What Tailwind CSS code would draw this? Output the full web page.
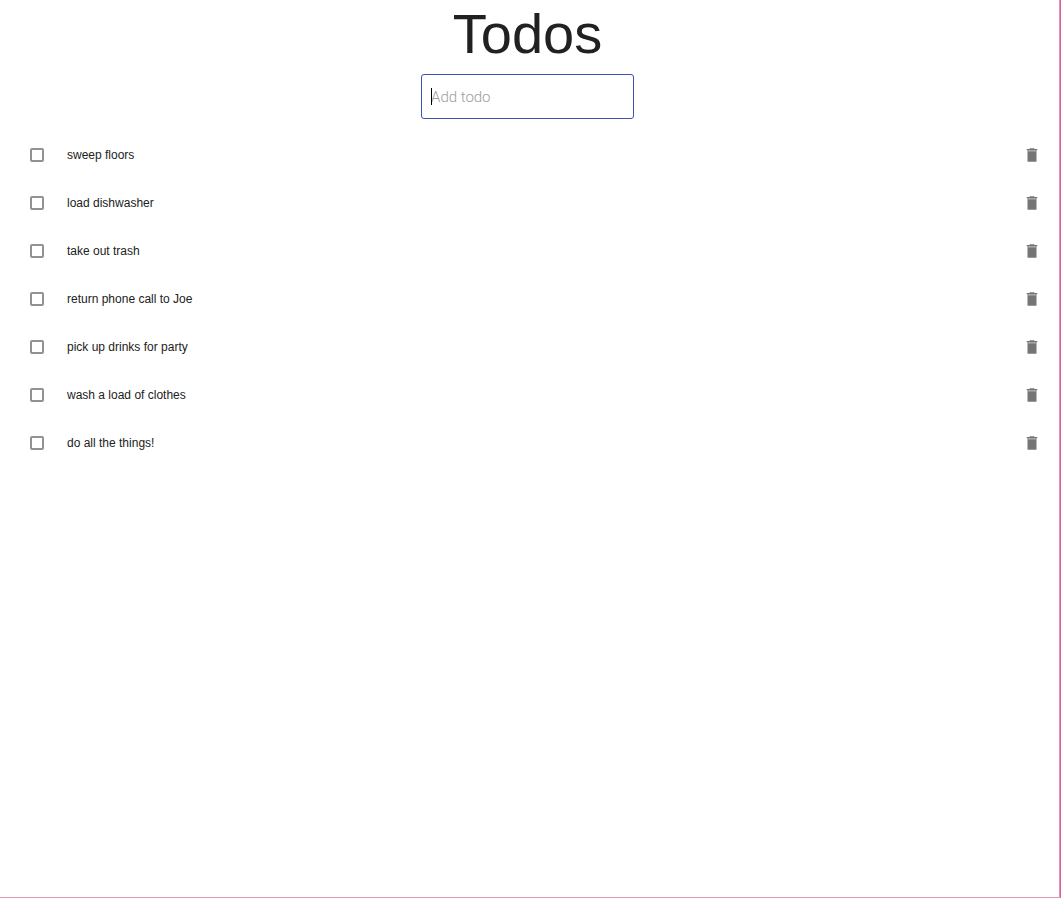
<!DOCTYPE html>
<html lang="en">
<head>
<meta charset="utf-8">
<meta name="viewport" content="width=device-width, initial-scale=1">
<title>Todos</title>
<script src="https://cdn.jsdelivr.net/npm/@tailwindcss/browser@4"></script>
</head>
<body class="flex min-h-screen flex-col items-stretch border-r border-b border-r-[#d9609b] border-b-[#e892b9] bg-white font-['Liberation_Sans',sans-serif] text-[#212121]">
<main class="flex-1 border-r border-[#ee8fbd] pr-1">
<h1 class="pt-1 text-center text-[56px] leading-[60px]">Todos</h1>
<form class="mt-[10px] flex justify-center">
  <div class="relative">
    <input type="text" placeholder="Add todo" aria-label="Add todo" class="block h-[45px] w-[213px] rounded-[3px] border border-[#3f51b5] bg-white px-[9px] font-['Roboto',sans-serif] text-[15px] font-light outline-none placeholder:text-[#9e9e9e]">
    <span class="absolute top-[14px] left-[10px] h-[17px] w-px bg-black"></span>
  </div>
</form>
<ul id="todos" class="mt-3 pr-[11px] pl-[30px]"></ul>
</main>
<template id="row">
  <li class="flex h-12 items-center">
    <input type="checkbox" class="size-[14px] shrink-0 appearance-none rounded-[2px] border-2 border-[#929292] bg-white checked:bg-[#3f51b5]">
    <label class="ml-[23px] flex-1 text-[12px] leading-4"></label>
    <button type="button" class="flex size-6 items-center justify-center text-[#757575]" aria-label="Delete">
      <svg class="size-[18px]" viewBox="0 0 24 24" fill="currentColor" aria-hidden="true"><path d="M6 20.2c0 .4.4.8.8.8h10.4c.4 0 .8-.4.8-.8V7H6zM19 4h-3.5l-1-1h-5l-1 1H5v2h14z"/><path d="M5.3 6h13.4v1H5.3z" opacity=".55"/></svg>
    </button>
  </li>
</template>
<script>
const items = ["sweep floors", "load dishwasher", "take out trash", "return phone call to Joe", "pick up drinks for party", "wash a load of clothes", "do all the things!"];
items.forEach((text, i) => {
  const row = document.getElementById("row").content.cloneNode(true);
  const label = row.querySelector("label");
  row.querySelector("input").id = "todo-" + i;
  label.htmlFor = "todo-" + i;
  label.textContent = text;
  row.querySelector("button").setAttribute("aria-label", "Delete " + text);
  document.getElementById("todos").append(row);
});
</script>
</body>
</html>
